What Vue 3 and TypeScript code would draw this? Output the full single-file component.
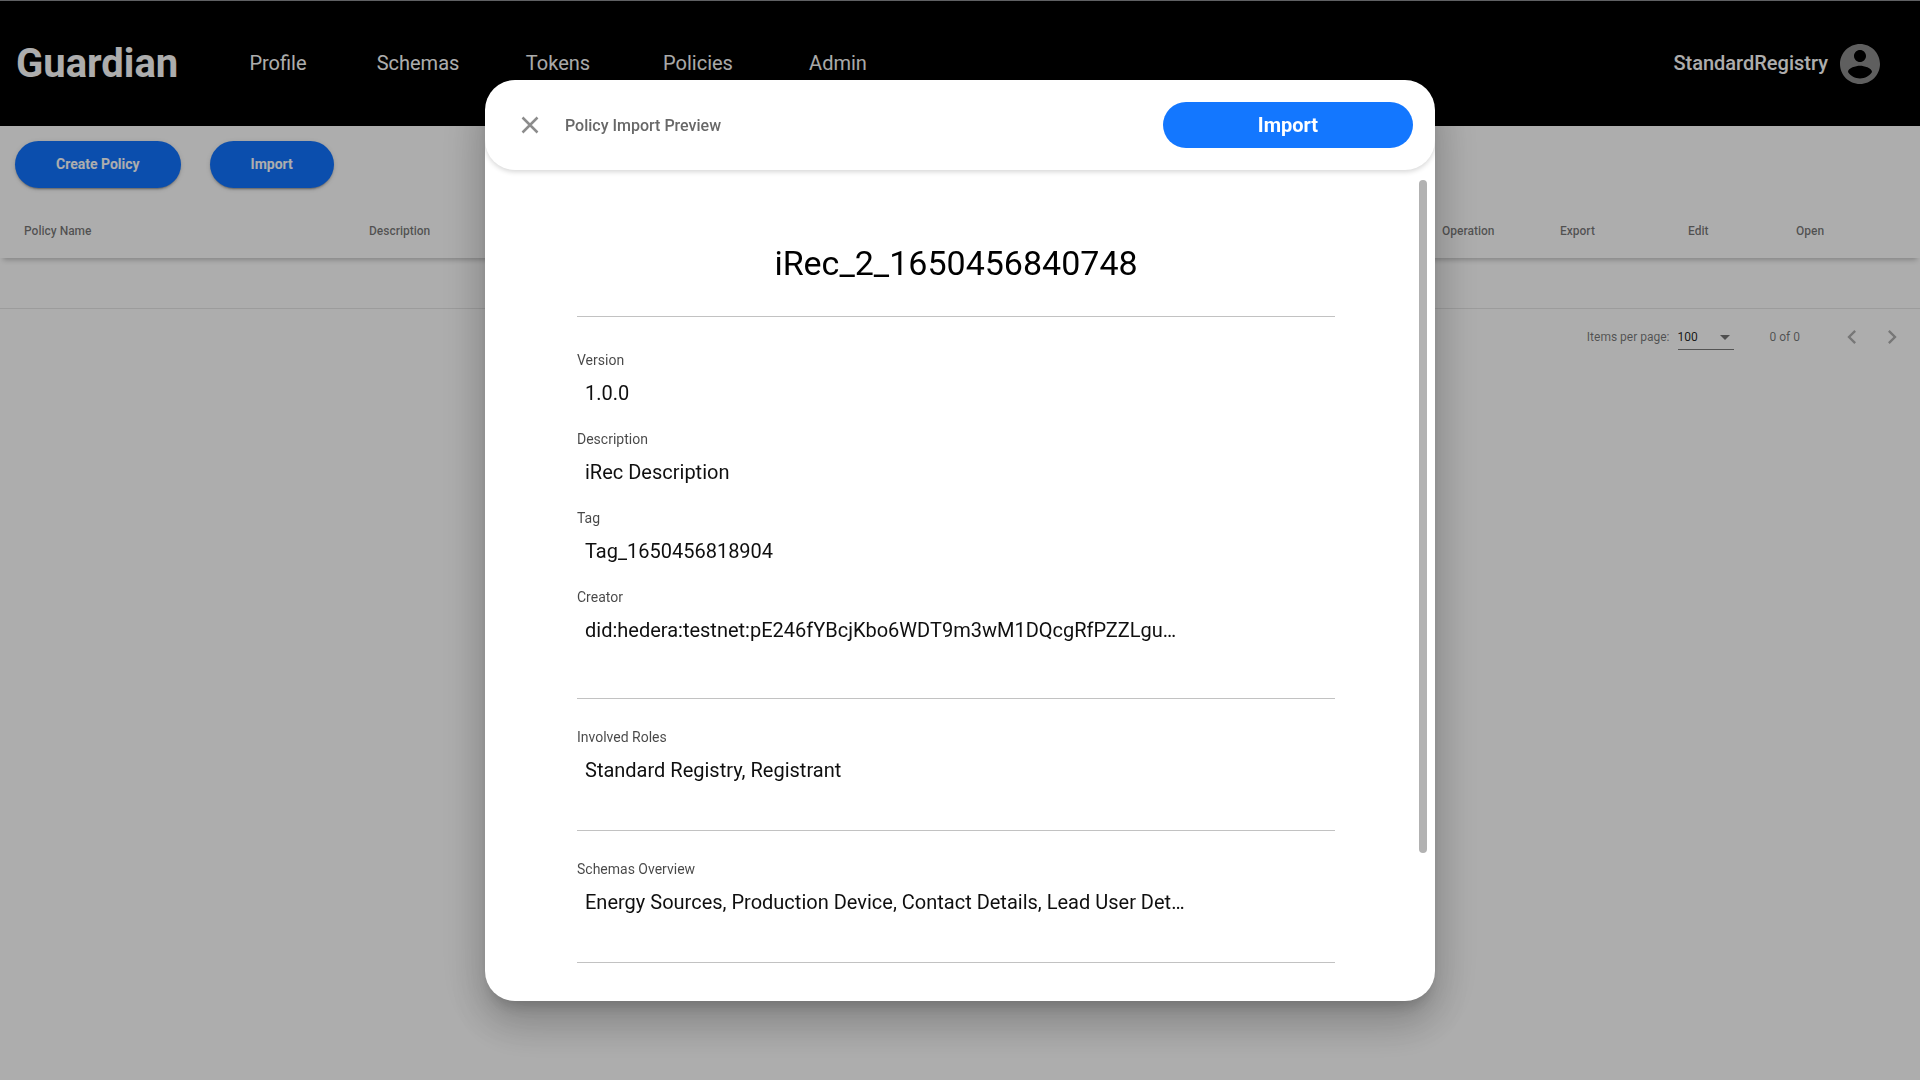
<script setup lang="ts">
import { ref } from 'vue'

interface Field {
  label: string
  value: string
}

const links: string[] = ['Profile', 'Schemas', 'Tokens', 'Policies', 'Admin']

const columns: { key: string; title: string }[] = [
  { key: 'name', title: 'Policy Name' },
  { key: 'description', title: 'Description' },
  { key: 'operation', title: 'Operation' },
  { key: 'export', title: 'Export' },
  { key: 'edit', title: 'Edit' },
  { key: 'open', title: 'Open' },
]

const sections: Field[][] = [
  [
    { label: 'Version', value: '1.0.0' },
    { label: 'Description', value: 'iRec Description' },
    { label: 'Tag', value: 'Tag_1650456818904' },
    { label: 'Creator', value: 'did:hedera:testnet:pE246fYBcjKbo6WDT9m3wM1DQcgRfPZZLgu…' },
  ],
  [{ label: 'Involved Roles', value: 'Standard Registry, Registrant' }],
  [
    {
      label: 'Schemas Overview',
      value: 'Energy Sources, Production Device, Contact Details, Lead User Det…',
    },
  ],
]

const pageSize = ref(100)
const dialogOpen = ref(true)
</script>

<template>
  <div class="page">
    <header class="topbar">
      <div class="brand">Guardian</div>
      <nav class="nav">
        <a v-for="link in links" :key="link" href="#" class="nav-link">{{ link }}</a>
      </nav>
      <div class="account">
        <span class="user">StandardRegistry</span>
        <svg class="avatar" viewBox="0 0 24 24" aria-hidden="true">
          <path
            d="M12 2C6.48 2 2 6.48 2 12s4.48 10 10 10 10-4.48 10-10S17.52 2 12 2zm0 3c1.66 0 3 1.34 3 3s-1.34 3-3 3-3-1.34-3-3 1.34-3 3-3zm0 14.2c-2.5 0-4.71-1.28-6-3.22.03-1.99 4-3.08 6-3.08 1.99 0 5.97 1.09 6 3.08-1.29 1.94-3.5 3.22-6 3.22z"
          />
        </svg>
      </div>
    </header>

    <main>
      <div class="actions">
        <button type="button" class="action">Create Policy</button>
        <button type="button" class="action" @click="dialogOpen = true">Import</button>
      </div>

      <table class="policies">
        <thead>
          <tr>
            <th v-for="column in columns" :key="column.key" scope="col" :class="column.key">
              {{ column.title }}
            </th>
          </tr>
        </thead>
      </table>
      <div class="empty-row"></div>

      <div class="paginator">
        <label for="page-size">Items per page:</label>
        <div class="size-box">
          <select id="page-size" v-model="pageSize">
            <option :value="10">10</option>
            <option :value="25">25</option>
            <option :value="50">50</option>
            <option :value="100">100</option>
          </select>
          <svg class="caret" viewBox="0 0 10 5" aria-hidden="true"><path d="M0 0h10L5 5z" /></svg>
        </div>
        <span class="range">0 of 0</span>
        <button type="button" class="pager" aria-label="Previous page" disabled>
          <svg viewBox="0 0 24 24"><path d="M15.41 7.41L14 6l-6 6 6 6 1.41-1.41L10.83 12z" /></svg>
        </button>
        <button type="button" class="pager" aria-label="Next page" disabled>
          <svg viewBox="0 0 24 24"><path d="M10 6L8.59 7.41 13.17 12l-4.58 4.59L10 18l6-6z" /></svg>
        </button>
      </div>
    </main>

    <div v-if="dialogOpen" class="backdrop">
      <section class="dialog" role="dialog" aria-labelledby="dialog-title">
        <header class="dialog-head">
          <button type="button" class="close" aria-label="Close" @click="dialogOpen = false">
            <svg viewBox="0 0 18 18"><path d="M1.5 1.5l15 15M16.5 1.5l-15 15" /></svg>
          </button>
          <h2 id="dialog-title">Policy Import Preview</h2>
          <button type="button" class="confirm">Import</button>
        </header>
        <div class="dialog-body">
          <div class="content">
            <h1>iRec_2_1650456840748</h1>
            <dl v-for="(fields, index) in sections" :key="index" class="section">
              <div v-for="field in fields" :key="field.label" class="field">
                <dt>{{ field.label }}</dt>
                <dd>{{ field.value }}</dd>
              </div>
            </dl>
          </div>
          <div class="track"><div class="thumb"></div></div>
        </div>
      </section>
    </div>
  </div>
</template>

<style>
body {
  margin: 0;
}
</style>

<style scoped>
.page {
  min-height: 100vh;
  background: #fff;
  font-family: Roboto, 'Liberation Sans', sans-serif;
}

.page *,
.page {
  box-sizing: border-box;
}

button,
select {
  font-family: inherit;
}

.topbar {
  display: flex;
  align-items: center;
  height: 126px;
  padding: 0 32px 0 16px;
  border-top: 1px solid #5f6063;
  background: #000;
  color: #fff;
}

.brand {
  width: 192px;
  font-size: 40px;
  font-weight: 700;
  line-height: 48px;
}

.nav {
  display: flex;
}

.nav-link,
.user {
  padding-bottom: 2px;
  font-size: 20px;
  line-height: 24px;
}

.nav-link {
  width: 140px;
  color: #fff;
  text-align: center;
  text-decoration: none;
}

.account {
  display: flex;
  align-items: center;
  gap: 8px;
  margin-left: auto;
}

.user {
  font-weight: 500;
}

.avatar {
  width: 48px;
  height: 48px;
  margin-right: 4px;
  fill: #8c8c8c;
}

.actions {
  display: flex;
  gap: 29px;
  padding: 15px 15px 20px;
}

.action {
  height: 47px;
  padding: 0 41px 2px;
  border: 0;
  border-radius: 24px;
  background: #1174ff;
  box-shadow:
    0 3px 1px -2px rgba(0, 0, 0, 0.2),
    0 2px 2px 0 rgba(0, 0, 0, 0.14),
    0 1px 5px 0 rgba(0, 0, 0, 0.12);
  color: #fff;
  font-size: 14px;
  font-weight: 700;
}

.policies {
  width: 100%;
  table-layout: fixed;
  border-collapse: collapse;
  box-shadow: 0 5px 5px -3px rgba(0, 0, 0, 0.24);
}

.policies th {
  height: 50px;
  padding: 0 0 4px;
  color: rgba(0, 0, 0, 0.54);
  font-size: 12px;
  font-weight: 500;
  line-height: 16px;
  text-align: left;
}

.policies th.name {
  width: 369px;
  padding-left: 24px;
}

.policies th.operation {
  width: 118px;
}

.policies th.export {
  width: 128px;
}

.policies th.edit {
  width: 108px;
}

.policies th.open {
  width: 124px;
}

.empty-row {
  height: 51px;
  border-bottom: 1px solid #e6e6e6;
}

.paginator {
  display: flex;
  align-items: center;
  justify-content: flex-end;
  height: 56px;
  padding: 0 8px;
  color: rgba(0, 0, 0, 0.54);
  font-size: 12px;
  line-height: 16px;
}

.size-box {
  position: relative;
  width: 56px;
  margin: 0 36px 0 8px;
  padding: 4px 0;
  border-bottom: 1px solid #7c7c7c;
}

.size-box select {
  display: block;
  width: 100%;
  padding: 0;
  border: 0;
  background: transparent;
  color: rgba(0, 0, 0, 0.87);
  font-size: 12px;
  line-height: 16px;
  appearance: none;
}

.caret {
  position: absolute;
  right: 4px;
  top: 10px;
  width: 10px;
  height: 5px;
  fill: #757575;
  pointer-events: none;
}

.range {
  margin-right: 32px;
}

.pager {
  display: flex;
  align-items: center;
  justify-content: center;
  width: 40px;
  height: 40px;
  padding: 0;
  border: 0;
  background: transparent;
}

.pager svg {
  width: 28px;
  height: 28px;
  fill: #b0b0b0;
}

.backdrop {
  position: fixed;
  inset: 1px 0 0;
  display: flex;
  align-items: center;
  justify-content: center;
  background: rgba(0, 0, 0, 0.32);
}

.dialog {
  width: 950px;
  max-width: 80vw;
  max-height: 100vh;
  overflow: hidden;
  border-radius: 30px;
  background: #fff;
  box-shadow:
    0 11px 15px -7px rgba(0, 0, 0, 0.2),
    0 24px 38px 3px rgba(0, 0, 0, 0.14),
    0 9px 46px 8px rgba(0, 0, 0, 0.12);
}

.dialog-head {
  display: flex;
  align-items: center;
  height: 90px;
  padding: 0 22px 0 36px;
  border-radius: 30px;
  box-shadow: 0 2px 5px rgba(0, 0, 0, 0.16);
}

.close {
  width: 18px;
  height: 18px;
  padding: 0;
  border: 0;
  background: transparent;
}

.close svg {
  display: block;
  width: 18px;
  height: 18px;
  fill: none;
  stroke: #8c8c8c;
  stroke-width: 2.5;
}

.dialog-head h2 {
  margin: 0 auto 0 26px;
  padding-top: 2px;
  color: #686868;
  font-size: 16px;
  font-weight: 500;
  line-height: 20px;
}

.confirm {
  width: 250px;
  height: 46px;
  padding: 0;
  border: 0;
  border-radius: 23px;
  background: #1377ff;
  color: #fff;
  font-size: 20px;
  font-weight: 700;
}

.dialog-body {
  display: flex;
  padding: 10px 8px 38px 92px;
}

.content {
  flex: 1;
  min-width: 0;
  padding-right: 84px;
}

.content h1 {
  margin: 0;
  padding: 63px 0 33px;
  border-bottom: 1px solid #c2c2c2;
  color: #000;
  font-size: 34px;
  font-weight: 400;
  line-height: 40px;
  text-align: center;
}

.section {
  display: flex;
  flex-direction: column;
  gap: 27px;
  margin: 0;
  padding: 30px 0 49px;
  border-bottom: 1px solid #c2c2c2;
}

.section:first-of-type {
  padding: 35px 0 57px;
}

.field dt {
  color: rgba(0, 0, 0, 0.72);
  font-size: 14px;
  line-height: 16px;
}

.field dd {
  overflow: hidden;
  margin: 14px 0 0;
  padding-left: 8px;
  color: rgba(0, 0, 0, 0.94);
  font-size: 20px;
  line-height: 22px;
  white-space: nowrap;
}

.track {
  width: 8px;
}

.thumb {
  height: 86%;
  border-radius: 4px;
  background: #b2b2b2;
}
</style>
